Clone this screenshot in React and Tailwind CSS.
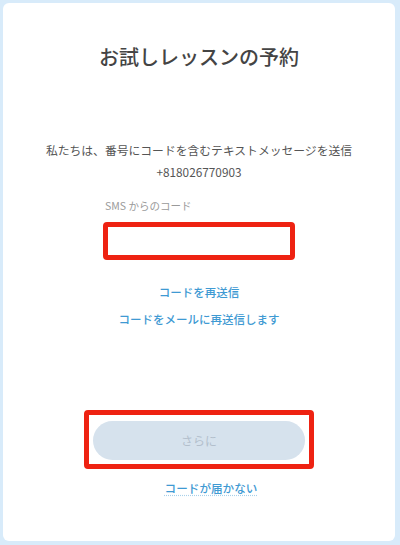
export default function App() {
  return (
    <div className="w-[400px] h-[545px] bg-[#d8ebfa] p-[3px] pr-[5px] pb-[4px] font-['Noto_Sans_CJK_JP','Noto_Sans',sans-serif]">
      <div className="h-full bg-white rounded-md flex flex-col items-center">
        <h1 className="mt-[40px] text-[20px] leading-[28px] font-medium text-[#444]">
          お試しレッスンの予約
        </h1>

        <p className="mt-[68px] text-[11.8px] leading-[22px] text-[#555] text-center">
          私たちは、番号にコードを含むテキストメッセージを送信
          <br />
          +818026770903
        </p>

        <div className="mt-[15px] w-[192px]">
          <label className="block pl-[2px] text-[10.5px] leading-[16px] text-[#9a9a9a]">
            SMS からのコード
          </label>
          <div className="mt-[8px] h-[38px] border-[5px] border-[#ee2212] rounded-[4px] bg-white">
            <input type="text" className="w-full h-full outline-none px-2 text-sm" />
          </div>
        </div>

        <button className="mt-[24px] text-[11.5px] leading-[16px] font-medium text-[#3f9ad3]">
          コードを再送信
        </button>
        <button className="mt-[11px] text-[11.5px] leading-[16px] font-medium text-[#3f9ad3]">
          コードをメールに再送信します
        </button>

        <div className="mt-[83px] w-[230px] h-[59px] border-[5px] border-[#ee2212] rounded-[4px] px-[4px] py-[6px] pb-[4px]">
          <button className="w-full h-[39px] rounded-full bg-[#d6e2ed] text-[12px] text-[#b3bfcc]">
            さらに
          </button>
        </div>

        <button className="mt-[11px] ml-[24px] text-[11.6px] leading-[16px] font-medium text-[#3f9ad3] underline decoration-dotted decoration-[#a9d0ea] underline-offset-2">
          コードが届かない
        </button>
      </div>
    </div>
  );
}
